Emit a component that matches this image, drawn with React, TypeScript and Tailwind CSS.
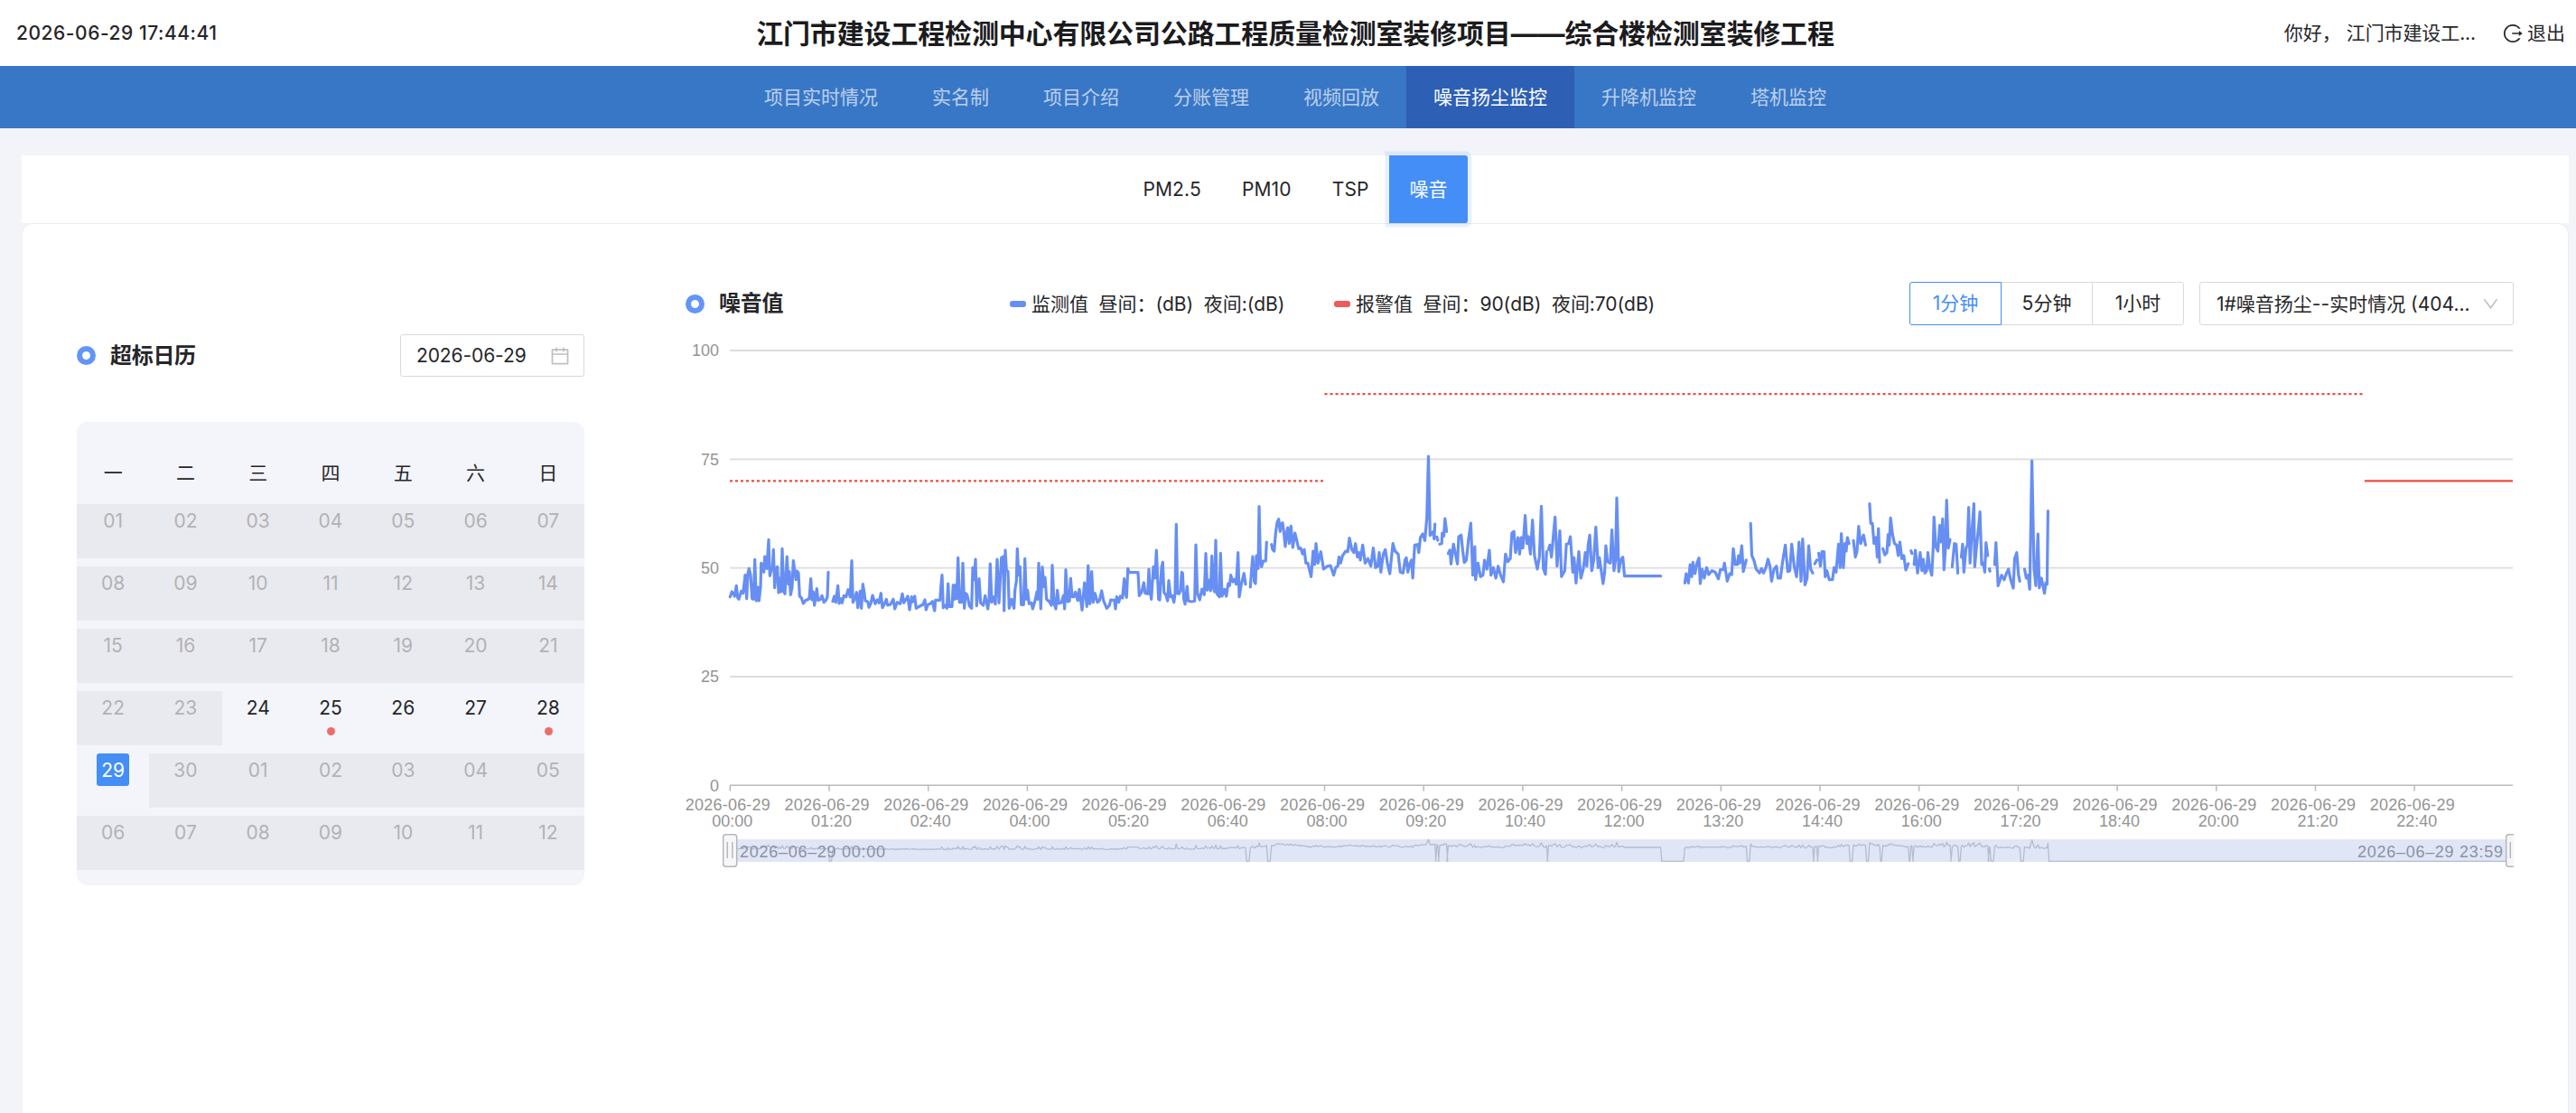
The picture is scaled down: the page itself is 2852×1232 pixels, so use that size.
import React from "react";
import { AiOutlineCalendar, AiOutlineDown, AiOutlineLogout } from "react-icons/ai";

/* ---------- noise curve ---------- */

type Block = { x0: number; y0: number; kx: number; segments: string[] };

// Every segment is a run of samples without a gap: "x,y" pairs in block units.
const BLOCKS: Block[] = [
  {
    x0: 800, y0: 540, kx: 1 / 3,
    segments: [
      "25,362 31,345 36,352 40,360 46,325 50,365 54,370 62,343 68,350 75,290 80,368 84,285 88,268 93,290 98,368 103,370 107,238 112,375 117,330 121,375 126,330 128,250 134,260 137,280 140,228 147,268 149,235 153,172 157,292 163,268 166,262 169,205 173,332 178,270 182,262 186,348 190,300 194,345 198,202 203,345 207,352 211,280 214,228 219,320 222,278 226,355 231,330 235,242 240,278 244,305 247,276 252,282 256,360 262,365 268,384 275,374 288,368 293,302 297,372 301,345 305,390 313,335 317,374 325,370 330,358 337,380 344,372 348,362 351,280",
      "366,377 371,360 376,380 383,325 387,384 393,368 397,382 403,358 410,362 417,338 424,362 429,242 433,380 440,365 445,347 449,398 457,343 461,400 466,320 470,345 474,375 482,378 486,397 492,385 498,357 507,385 514,372 520,382 526,350 531,398 538,385 544,370 548,390 557,388 567,370 572,402 580,380 590,385 597,352 602,382 615,360 621,405 628,362 632,378 638,360 643,400 655,393 665,388 672,372 676,405 682,388 690,385 697,377 704,408 707,373 722,373 725,330 729,290 733,398 740,390 745,400 749,318 753,394 762,394 766,323 770,370 775,322 778,368 782,232 787,380 794,380 798,250 803,400 807,350 812,355 820,392 827,400 831,265 836,305 840,237 844,392 852,302 857,382 866,390 872,358 881,402 885,370 889,252 894,380 900,362 906,386 912,237 918,382 926,232 932,228 935,408 939,207 943,275 948,278 952,400 960,370 968,400 971,340 976,310 979,202 983,290 988,262 992,388 1000,388 1004,235 1009,370 1013,340 1018,385 1026,382 1030,402 1037,378 1044,345 1047,370 1050,250 1057,402 1062,263 1067,328 1071,297 1076,370 1085,378 1092,390 1095,257 1101,385 1107,402 1112,340 1117,384 1126,380 1132,358 1136,402 1140,272 1146,378 1152,376 1156,300 1161,362 1167,362 1172,346 1180,374 1185,337 1194,406 1202,315 1210,394 1214,258 1220,385 1226,278 1231,380 1237,350 1245,380 1252,374 1259,342 1265,374 1276,400 1285,390 1289,372 1301,373 1305,402 1309,362 1316,380 1321,360 1328,366 1334,302 1338,350 1342,364 1346,268 1350,281 1380,281 1384,358 1392,346 1399,315 1404,350 1412,352 1416,270 1420,345 1424,370 1431,262 1436,300 1441,207 1448,370 1452,372 1458,265 1462,247 1466,348 1472,355 1478,375 1482,308 1488,362 1493,358 1499,380 1503,350 1507,121 1511,350 1516,352 1521,342 1525,280 1528,283 1532,370 1536,386 1543,327 1547,376 1558,378 1568,376 1572,189 1577,350 1585,372 1592,336 1600,355 1605,218 1610,340 1617,306 1621,342 1625,226 1630,330 1634,345 1638,174 1642,352 1650,362 1654,217 1659,360 1667,337 1673,360 1679,318 1684,325 1688,290 1695,312 1701,304 1706,320 1712,215 1716,362 1723,320 1728,300 1732,284 1737,320",
      "1753,330 1757,270 1761,228 1766,312 1770,318 1773,225 1779,268 1782,62 1786,230 1790,262 1796,243 1804,243 1807,180",
    ],
  },
  {
    x0: 1440, y0: 290, kx: 0.4464,
    segments: [
      "-72.4,938 -69.4,955 -65.7,960 -62,900 -58.2,865 -54.5,854 -50.8,895 -47.8,870 -44.8,866 -41.8,895 -38,945 -35,900 -32,882 -28.4,935 -24,877 -19.4,948 -14.2,900 -10.5,920 -5,952 0,950 5,970 9,955 13,1000 18,1000 26,1045 31,960 35,1005 38,935 43,1000 50,962 57,1020 66,1010 74,1008 82,1040 87,1015 92,1010 95,980 99,1000 104,975 112,960 117,962 121,917 127,955 132,965 136,935 141,980 145,965 148,990 154,940 160,1000 167,985 174,1010 180,950 186,1015 191,1010 195,965 199,1030 205,970 210,955 215,1000 221,1035 229,935 234,960 242,970 247,1030 254,1033 259,990 262,982 266,1030 271,1000 275,990 278,1050 283,940 290,938 293,965 297,915 303,903 308,925 313,850 317,645 321,908 329,895 331,920 333,870",
      "338,913 340,924",
      "345,937 350,935 351,900 355,910 358,852 362,895",
      "366,968 370,957 373,1003 379,937 384,970 389,1003 392,912 398,907 402,960 406,998 411,990 416,925 422,867 427,1040 432,945 434,1055 440,1000 446,1045 452,1040 456,990 462,1020 468,957 472,1040 478,1015 484,1050 490,1010 496,1040 503,1062 508,970 514,995 520,985 524,900 529,895 533,965 539,915 543,970 547,915 551,950 557,842 561,935 565,912 570,970 575,857 580,975 587,1020 592,980 597,811 602,1018 607,1037 610,962",
      "615,955 618,940 622,980 627,905 631,847 636,1010 643,893 647,1045 655,1025 659,937 665,935 669,912 675,1030 678,982 683,1066 690,962 695,1050 701,1020 706,965 710,1010 713,940 717,907 722,1025 727,990 732,880 738,1015 741,982 750,1068 754,1030 757,942 761,995 768,1000 772,890 777,1025 781,990 784,783 789,1028 794,990 799,980 803,1043 893,1043",
      "953,1066 956,1035 962,1066 966,1005 970,1045 973,997 978,1035 983,1000 988,983 991,1068 996,1020 1001,1050 1007,1015 1012,1038 1020,1025 1028,1030 1036,1052 1041,1022 1048,1022 1051,1000 1058,1060 1064,1035 1069,1038 1073,952 1078,1005 1083,1005 1086,975 1089,1000 1094,942 1098,1028 1105,990",
      "1116,868 1119,975 1124,990 1130,1020 1138,1033 1143,1018 1148,1033 1154,1015 1159,987 1164,1010 1168,1060 1174,1020 1180,1010 1184,1050 1190,1050 1195,1000 1202,940 1208,1028 1213,1025 1218,937 1224,1010 1230,1045 1236,930 1241,1060 1245,920 1251,1072 1256,1050 1260,942 1265,1020 1270,1033",
      "1275,1002 1280,990",
      "1285,967 1289,1010 1293,962 1298,962 1301,1045 1305,1025 1311,1055 1319,1055 1323,1015 1328,1030 1334,937 1338,1015 1341,902 1346,1015 1350,935 1353,960 1356,915 1360,935",
      "1371,925 1376,980 1380,960 1384,878 1389,935 1396,907 1401,940",
      "1411,803 1414,868 1418,868 1422,935 1427,915 1430,980 1433,885 1436,997",
      "1444,952 1449,973 1454,965 1457,905 1460,940 1463,850 1468,905 1473,935 1478,940 1482,975 1486,930 1491,985 1496,975 1501,1023 1507,1002",
    ],
  },
  {
    x0: 2100, y0: 290, kx: 0.4796,
    segments: [
      "33,959 35,968",
      "40,1005 43,957 48,1033 54,965 58,1025 61,987 65,1033 69,1025 72,965 76,1015 81,1040 84,950 86,847 90,945 95,960 99,875 102,930 106,853 109,1022 112,960 115,791 119,950 123,922",
      "128,1012 133,935 137,937 141,1033",
      "149,980 152,937 155,1030 160,950 163,940 166,815 169,1000 173,905 178,803 180,1012 184,950 189,880 192,830 196,1005 200,1000 203,1030 206,932 210,975",
      "214,1019 215,1027",
      "226,1005 229,932 234,1075 242,1040 248,1055 253,1035 258,1020 263,1055 269,1083 272,985 277,965 281,1040 284,1060",
      "295,1020 299,1050 303,1040 307,1087 312,660 317,1020 321,1075 326,903 329,1082 334,1050 341,1100 344,1065 347,1070 349,827",
    ],
  },
];

const ZERO_Y = 869.3;
const UNIT = 4.813;

const curve: [number, number][][] = BLOCKS.flatMap((b) =>
  b.segments.map((s) =>
    s.split(" ").map((p) => {
      const [x, y] = p.split(",").map(Number);
      return [b.x0 + x * b.kx, b.y0 + y / 3] as [number, number];
    }),
  ),
);

const curvePath = curve
  .map((seg) => "M" + seg.map(([x, y]) => `${x.toFixed(1)} ${y.toFixed(1)}`).join("L"))
  .join("");

// Overview line of the zoom slider: gaps fall to zero.
const overview = (() => {
  const pts: string[] = [];
  const base = 953.3;
  curve.forEach((seg, i) => {
    if (i > 0) pts.push(`${(seg[0][0] - 1.4).toFixed(1)} ${base}`);
    seg.forEach(([x, y]) => pts.push(`${x.toFixed(1)} ${(base - ((ZERO_Y - y) / UNIT) * 0.318).toFixed(1)}`));
    pts.push(`${(seg[seg.length - 1][0] + 1.2).toFixed(1)} ${base}`);
  });
  pts.push(`2782 ${base}`);
  return "M" + pts.join("L");
})();

const TIMES = [
  "00:00", "01:20", "02:40", "04:00", "05:20", "06:40", "08:00", "09:20", "10:40",
  "12:00", "13:20", "14:40", "16:00", "17:20", "18:40", "20:00", "21:20", "22:40",
];

function Handle({ x }: { x: number }) {
  return (
    <g>
      <rect x={x} y="923.7" width="15" height="35.5" rx="3" fill="#f7f7f7" stroke="#b4b7bc" strokeWidth="1.5" />
      <path d={`M${x + 4.6} 932V950M${x + 10.2} 932V950`} stroke="#b4b7bc" strokeWidth="1.5" />
    </g>
  );
}

function Chart() {
  return (
    <svg
      viewBox="757 364 2026 600"
      className="block h-[600px] w-[2026px] font-['Liberation_Sans',Arial,sans-serif] text-[18px]"
    >
      {[100, 75, 50, 25].map((v) => (
        <path key={v} d={`M808 ${ZERO_Y - v * UNIT}H2782`} stroke="#dcdcdf" strokeWidth="1.8" />
      ))}
      {[100, 75, 50, 25, 0].map((v) => (
        <text key={v} x="796" y={ZERO_Y - v * UNIT + 6.3} textAnchor="end" fill="#949494">
          {v}
        </text>
      ))}
      <path d={`M808 ${ZERO_Y}H2782`} stroke="#bababa" strokeWidth="1.5" />
      {TIMES.map((t, i) => {
        const x = 808.3 + i * 109.7;
        return (
          <g key={t} fill="#949494">
            <path d={`M${x} ${ZERO_Y}v6.5`} stroke="#bababa" strokeWidth="1.5" />
            <text x={x - 2.5} y="897" textAnchor="middle" textLength="94">
              2026-06-29
            </text>
            <text x={x + 2.5} y="915" textAnchor="middle">
              {t}
            </text>
          </g>
        );
      })}
      <path d="M808 532.3H1466" stroke="#ee4c40" strokeWidth="2.2" strokeDasharray="3 3" />
      <path d="M1466.5 436.1H2617" stroke="#ee4c40" strokeWidth="2.2" strokeDasharray="3 3" />
      <path d="M2618 532.3H2782" stroke="#ee4c40" strokeWidth="2.2" />
      <path d={curvePath} fill="none" stroke="#678ff3" strokeWidth="3.2" strokeLinejoin="round" strokeLinecap="round" />

      <rect x="808" y="929" width="1974" height="25" fill="#e0e6f6" />
      <path d={overview} fill="none" stroke="#b4bccf" strokeWidth="1.3" strokeLinejoin="round" />
      <Handle x={800.7} />
      <Handle x={2774.7} />
      <text x="819" y="948.5" fill="#8c92a4" textLength="161">
        2026–06–29 00:00
      </text>
      <text x="2610" y="948.5" fill="#8c92a4" textLength="161">
        2026–06–29 23:59
      </text>
    </svg>
  );
}

/* ---------- page ---------- */

const MENU = ["项目实时情况", "实名制", "项目介绍", "分账管理", "视频回放", "噪音扬尘监控", "升降机监控", "塔机监控"];

function Header() {
  return (
    <header className="grid h-[73px] grid-cols-[1fr_auto_1fr] items-center bg-white pr-3 pl-[18px]">
      <div className="font-medium tracking-[0.54px]">2026-06-29 17:44:41</div>
      <h1 className="translate-x-[5px] text-[30px] leading-10 font-bold tracking-[-0.16px] text-[#1b1b1d] whitespace-nowrap">
        江门市建设工程检测中心有限公司公路工程质量检测室装修项目——综合楼检测室装修工程
      </h1>
      <div className="flex items-center justify-end whitespace-nowrap">
        <span className="mr-[6px]">你好，</span>
        <span className="mr-[29px] tracking-[-0.1px]">江门市建设工...</span>
        <AiOutlineLogout className="mr-[4px] size-[24px]" />
        <span>退出</span>
      </div>
    </header>
  );
}

function Nav() {
  return (
    <nav className="flex h-[69px] justify-center bg-[#3876c6] pl-4">
      {MENU.map((m) => (
        <div
          key={m}
          className={
            "flex items-center px-[30px] " + (m === "噪音扬尘监控" ? "bg-[#2d5fb4] text-white" : "text-white/65")
          }
        >
          {m}
        </div>
      ))}
    </nav>
  );
}

function Tabs() {
  return (
    <div className="mr-2 ml-6 mt-[30px] flex h-[75px] justify-center bg-white">
      {["PM2.5", "PM10", "TSP"].map((t) => (
        <div key={t} className="flex items-center px-[22.5px] tracking-[0.15px]">
          {t}
        </div>
      ))}
      <div className="z-10 flex items-center rounded-r-[3px] bg-[#448ef7] px-[22.5px] text-white shadow-[0_0_0_4.5px_rgba(68,142,247,0.13)]">
        噪音
      </div>
    </div>
  );
}

function Heading({ children }: { children: React.ReactNode }) {
  return (
    <div className="flex items-center gap-4 text-[24px] leading-9 font-semibold tracking-[-0.3px] text-[#262628]">
      <span className="size-[21px] rounded-full border-6 border-[#6394f9]" />
      {children}
    </div>
  );
}

const DAYS = [
  "01", "02", "03", "04", "05", "06", "07", "08", "09", "10", "11", "12", "13", "14",
  "15", "16", "17", "18", "19", "20", "21", "22", "23", "24", "25", "26", "27", "28",
  "29", "30", "01", "02", "03", "04", "05", "06", "07", "08", "09", "10", "11", "12",
];

function Day({ index, label }: { index: number; label: string }) {
  const open = index >= 23 && index <= 28;
  const selected = index === 28;
  const alarm = index === 24 || index === 27;
  return (
    <div
      className={"flex h-[60px] flex-col items-center " + (open ? "text-[#262628]" : "bg-[#e9eaef] text-[#b2b2b6]")}
    >
      <span
        className={
          "flex h-9 w-9 items-center justify-center pt-[1px] leading-none " +
          (selected ? "rounded-[3px] bg-[#448ef7] text-white" : "")
        }
      >
        {label}
      </span>
      {alarm && <span className="mt-1 size-[9px] translate-x-[1px] rounded-full bg-[#ed6c69]" />}
    </div>
  );
}

function CalendarPanel() {
  return (
    <section className="mt-[122px] w-[562px]">
      <div className="flex h-[47px] items-center justify-between">
        <Heading>超标日历</Heading>
        <div className="flex h-[47px] w-[204px] items-center justify-between rounded-[3px] border-[1.5px] border-[#d9d9d9] pr-[14px] pl-[17px]">
          <span className="tracking-[-0.1px]">2026-06-29</span>
          <AiOutlineCalendar className="size-[24px] text-[#bfbfbf]" />
        </div>
      </div>
      <div className="mt-[50px] h-[513px] rounded-xl bg-[#f3f5fb] pt-[38px]">
        <div className="grid h-[53px] grid-cols-7 text-center leading-[37px]">
          {["一", "二", "三", "四", "五", "六", "日"].map((d) => (
            <div key={d}>{d}</div>
          ))}
        </div>
        <div className="grid grid-cols-7 gap-y-[9px]">
          {DAYS.map((d, i) => (
            <Day key={i} index={i} label={d} />
          ))}
        </div>
      </div>
    </section>
  );
}

function ChartPanel() {
  return (
    <section className="mt-16 ml-[110px] w-[2026px]">
      <div className="flex h-12 items-center pl-[2px]">
        <Heading>噪音值</Heading>
        <div className="ml-[251px] flex items-center whitespace-pre">
          <span className="mr-[6px] h-[7px] w-[18px] rounded-[3px] bg-[#678ff3]" />
          <span className="w-[335px] tracking-[-0.06px]">监测值  昼间：(dB)  夜间:(dB)</span>
          <span className="mr-[6px] h-[7px] w-[18px] rounded-[3px] bg-[#ee5b5b]" />
          <span className="tracking-[-0.06px]">报警值  昼间：90(dB)  夜间:70(dB)</span>
        </div>
        <div className="ml-auto flex h-12 text-center leading-[45px]">
          <div className="w-[102px] rounded-l-[3px] border-[1.5px] border-[#448ef7] text-[#448ef7]">1分钟</div>
          <div className="w-[100px] border-y-[1.5px] border-[#d9d9d9]">5分钟</div>
          <div className="w-[102px] rounded-r-[3px] border-[1.5px] border-[#d9d9d9]">1小时</div>
        </div>
        <div className="ml-[17px] flex h-12 w-[348px] items-center justify-between rounded-[3px] border-[1.5px] border-[#d9d9d9] pr-[14px] pl-[18px] whitespace-nowrap">
          <span>1#噪音扬尘--实时情况 (404...</span>
          <AiOutlineDown className="size-[21px] text-[#bfbfbf]" />
        </div>
      </div>
      <div className="mt-1">
        <Chart />
      </div>
    </section>
  );
}

export default function App() {
  return (
    <div className="flex min-h-screen w-[2852px] flex-col overflow-hidden bg-[#f3f4fa] font-[Inter,'Noto_Sans_CJK_SC',sans-serif] text-[21px] leading-[33px] text-[#262628]">
      <Header />
      <Nav />
      <Tabs />
      <main className="mr-2 ml-6 flex grow items-start rounded-t-xl border border-b-0 border-[#ebedf0] bg-white pl-[60px]">
        <CalendarPanel />
        <ChartPanel />
      </main>
    </div>
  );
}
